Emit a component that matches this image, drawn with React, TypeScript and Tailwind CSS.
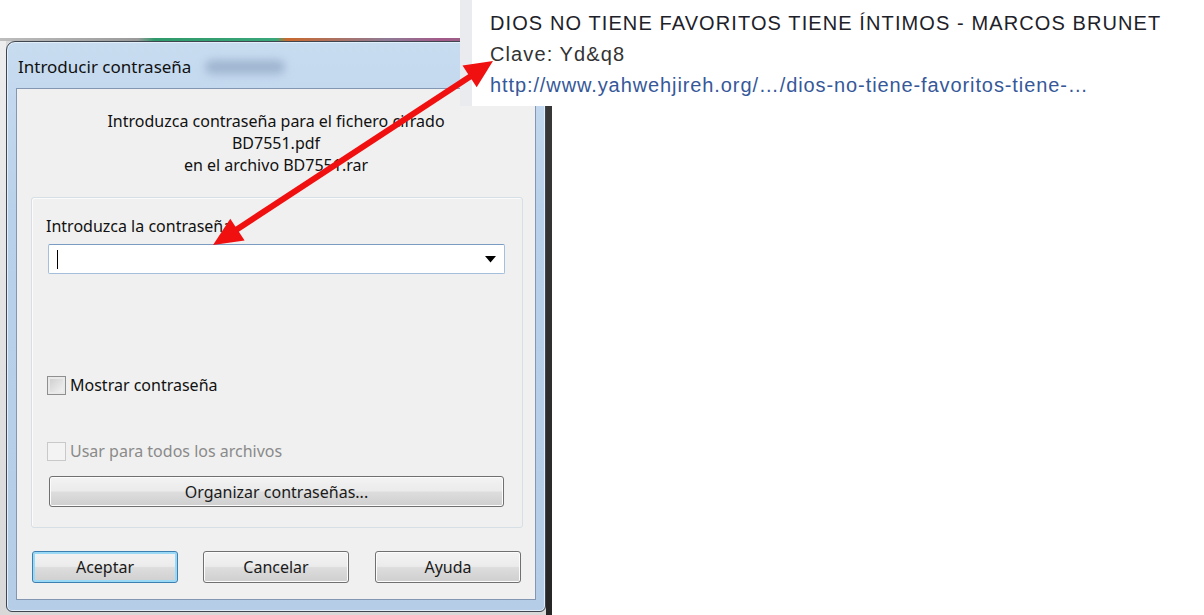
import React from "react"

const winFont = { fontFamily: '"Noto Sans", "Open Sans", Arial, sans-serif' }

function Checkbox({ disabled }: { disabled?: boolean }) {
  return (
    <div
      className={
        disabled
          ? "w-[19px] h-[19px] border border-[#c9c9c9] bg-[#f3f3f3]"
          : "w-[19px] h-[19px] border border-[#8e8f8f] bg-[linear-gradient(135deg,#cbcbcb,#f6f6f6)] shadow-[inset_0_0_0_2px_#e9e9e9]"
      }
    />
  )
}

function WinButton({ label, primary, className }: { label: string; primary?: boolean; className?: string }) {
  return (
    <div
      className={
        "flex items-center justify-center rounded-[3px] border text-[16px] text-[#1a1a1a] bg-[linear-gradient(to_bottom,#f3f3f3_0%,#ebebeb_48%,#dddddd_52%,#cfcfcf_100%)] " +
        (primary
          ? "border-[#3c7fb1] shadow-[inset_0_0_0_2px_#9ad9f6]"
          : "border-[#707070] shadow-[inset_0_0_0_1px_#fcfcfc]") +
        " " +
        (className ?? "")
      }
    >
      {label}
    </div>
  )
}

function Dialog() {
  return (
    <div className="w-[552px] h-[577px] flex flex-col bg-[#d9d9d9]" style={winFont}>
      <div className="h-[3px] bg-[linear-gradient(to_right,#bdbdbd_0%,#9a9a9a_25%,#2f9a6b_28%,#3aa77a_50%,#c9692e_52%,#8f7a95_70%,#a35a8a_80%,#777_100%)]" />
      <div className="flex flex-1">
        <div className="w-[6px] bg-[linear-gradient(to_bottom,#ededed,#d8d8d8)]" />
        <div className="w-[540px] h-[571px] rounded-t-[9px] rounded-b-[6px] border border-[#3f4650] bg-[linear-gradient(to_bottom,#c8dcf0_0%,#b9d1ea_30%,#b5cde7_100%)] flex flex-col px-[9px] pb-[11px] shadow-[inset_0_0_0_1px_#e2eefa]">
          <div className="h-[46px] flex items-center pl-[2px] pt-[4px]">
            <span className="text-[17px] text-[#111]">Introducir contraseña</span>
            <div className="ml-[14px] w-[80px] h-[14px] rounded-full bg-[#9fb5d0] blur-[4px]" />
          </div>
          <div className="flex-1 bg-[#f0f0f0] border border-[#8397b2] flex flex-col">
            <div className="pt-[21px] text-center leading-[22px] text-[16px] text-[#111]">
              <div>Introduzca contraseña para el fichero cifrado</div>
              <div>BD7551.pdf</div>
              <div>en el archivo BD7551.rar</div>
            </div>
            <div className="mt-[21px] ml-[14px] w-[492px] h-[331px] rounded-[3px] border border-[#d5dfe5] shadow-[inset_1px_1px_0_#fbfbfb] px-[14px] pt-[18px] flex flex-col">
              <div className="leading-[20px] text-[16px] text-[#111]">Introduzca la contraseña</div>
              <div className="mt-[8px] ml-[2px] w-[457px] h-[30px] bg-white rounded-[2px] border border-[#a3bfdc] border-t-[#7a9cc2] flex items-center pl-[8px] pr-[8px]">
                <div className="w-[1px] h-[19px] bg-black" />
                <div className="flex-1" />
                <svg width="11" height="7" viewBox="0 0 11 7">
                  <path d="M0 0 H11 L5.5 6.5 Z" fill="#000" />
                </svg>
              </div>
              <div className="mt-[101px] ml-[1px] flex items-center gap-[4px] leading-[20px] text-[16px] text-[#111]">
                <Checkbox />
                <span>Mostrar contraseña</span>
              </div>
              <div className="mt-[46px] ml-[1px] flex items-center gap-[4px] leading-[20px] text-[16px] text-[#8a8a8a]">
                <Checkbox disabled />
                <span>Usar para todos los archivos</span>
              </div>
              <WinButton label="Organizar contraseñas..." className="mt-[15px] ml-[3px] w-[455px] h-[31px]" />
            </div>
            <div className="mt-[23px] pl-[15px] flex">
              <WinButton label="Aceptar" primary className="w-[146px] h-[32px]" />
              <WinButton label="Cancelar" className="ml-[25px] w-[146px] h-[32px]" />
              <WinButton label="Ayuda" className="ml-[26px] w-[146px] h-[32px]" />
            </div>
          </div>
        </div>
        <div className="w-[6px] bg-[linear-gradient(to_bottom,#3a3a3a,#262626)]" />
      </div>
    </div>
  )
}

export default function App() {
  return (
    <div className="relative w-[1204px] h-[615px] bg-white overflow-hidden">
      <div className="pt-[38px]">
        <Dialog />
      </div>

      {/* pasted post snippet */}
      <div
        className="absolute left-[460px] top-0 w-[744px] h-[106px] flex"
        style={{ fontFamily: '"Liberation Sans", Arial, sans-serif' }}
      >
        <div className="w-[12px] bg-[#e9ebee]" />
        <div className="flex-1 bg-white pl-[18px] pt-[8px] text-[20px] leading-[31px] tracking-[1.1px]">
          <div className="text-[#1d2129]">DIOS NO TIENE FAVORITOS TIENE ÍNTIMOS - MARCOS BRUNET</div>
          <div className="text-[#333]">Clave: Yd&amp;q8</div>
          <div className="text-[#365899] tracking-[0.9px]">http://www.yahwehjireh.org/…/dios-no-tiene-favoritos-tiene-…</div>
        </div>
      </div>

      {/* red double arrow */}
      <svg className="absolute left-0 top-0 pointer-events-none" width="1204" height="615">
        <line x1="236" y1="230" x2="471" y2="76" stroke="#f01010" strokeWidth="6" />
        <polygon points="213,245 244.6,240.5 230.3,218.7" fill="#f01010" />
        <polygon points="493,61 476.7,87.3 462.5,65.5" fill="#f01010" />
      </svg>
    </div>
  )
}
